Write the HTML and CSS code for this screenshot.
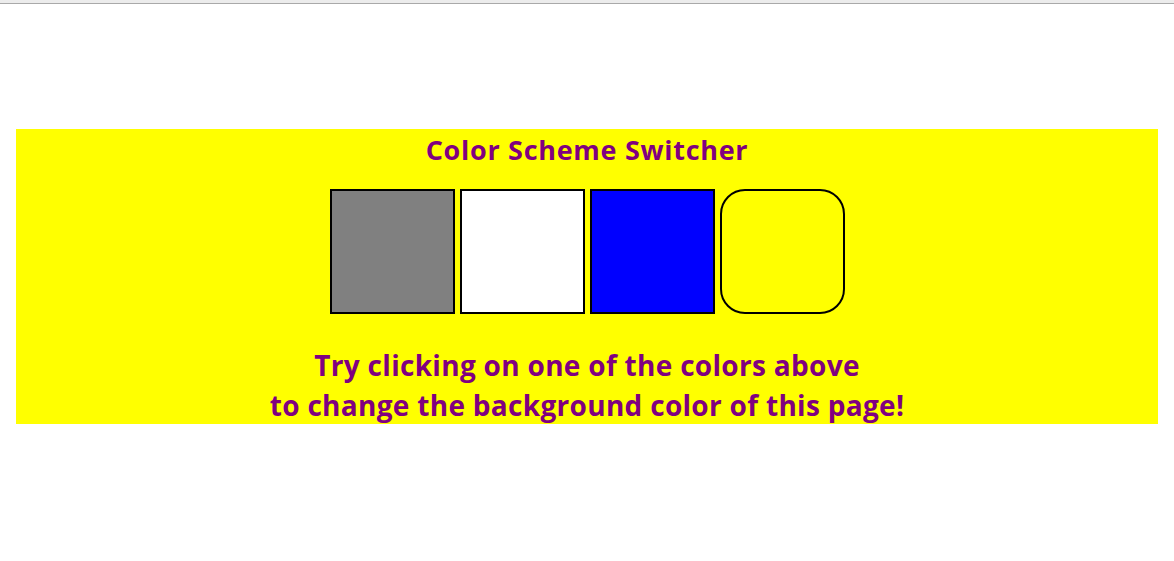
FILE: index.html
```html
<!DOCTYPE html>
<html>
<head>
<meta charset="utf-8">
<link rel="stylesheet" href="styles.css">
</head>
<body>
<div class="chrome"></div>
<main class="page">
  <section class="switcher">
    <h1 class="title">Color Scheme Switcher</h1>
    <div class="swatches">
      <button class="swatch swatch-gray" aria-label="gray"></button>
      <button class="swatch swatch-white" aria-label="white"></button>
      <button class="swatch swatch-blue" aria-label="blue"></button>
      <button class="swatch swatch-yellow" aria-label="yellow"></button>
    </div>
    <p class="hint">Try clicking on one of the colors above<br>to change the background color of this page!</p>
  </section>
</main>
</body>
</html>
```
FILE: styles.css
```css
html, body {
  margin: 0;
  padding: 0;
  background: #ffffff;
}
body {
  font-family: "Open Sans", "Liberation Sans", sans-serif;
}
.chrome {
  height: 3px;
  background: #ececec;
  border-bottom: 1px solid #a9a9a9;
}
.page {
  padding: 125px 16px 0;
}
.switcher {
  background: #ffff00;
  color: #800080;
  text-align: center;
  padding: 5px 0 0;
  height: 290px;
}
.title {
  margin: 0;
  font-size: 27px;
  font-weight: 700;
  line-height: 32px;
  letter-spacing: 0.7px;
}
.swatches {
  display: flex;
  justify-content: center;
  gap: 5px;
  margin-top: 23px;
}
.swatch {
  width: 125px;
  height: 125px;
  border: 2px solid #000;
  padding: 0;
  margin: 0;
  box-sizing: border-box;
}
.swatch-gray { background: #808080; }
.swatch-white { background: #ffffff; }
.swatch-blue { background: #0000ff; }
.swatch-yellow { background: #ffff00; border-radius: 25px; }
.hint {
  margin: 31px 0 0;
  font-size: 28px;
  font-weight: 700;
  line-height: 40px;
  letter-spacing: 0.3px;
}
```
